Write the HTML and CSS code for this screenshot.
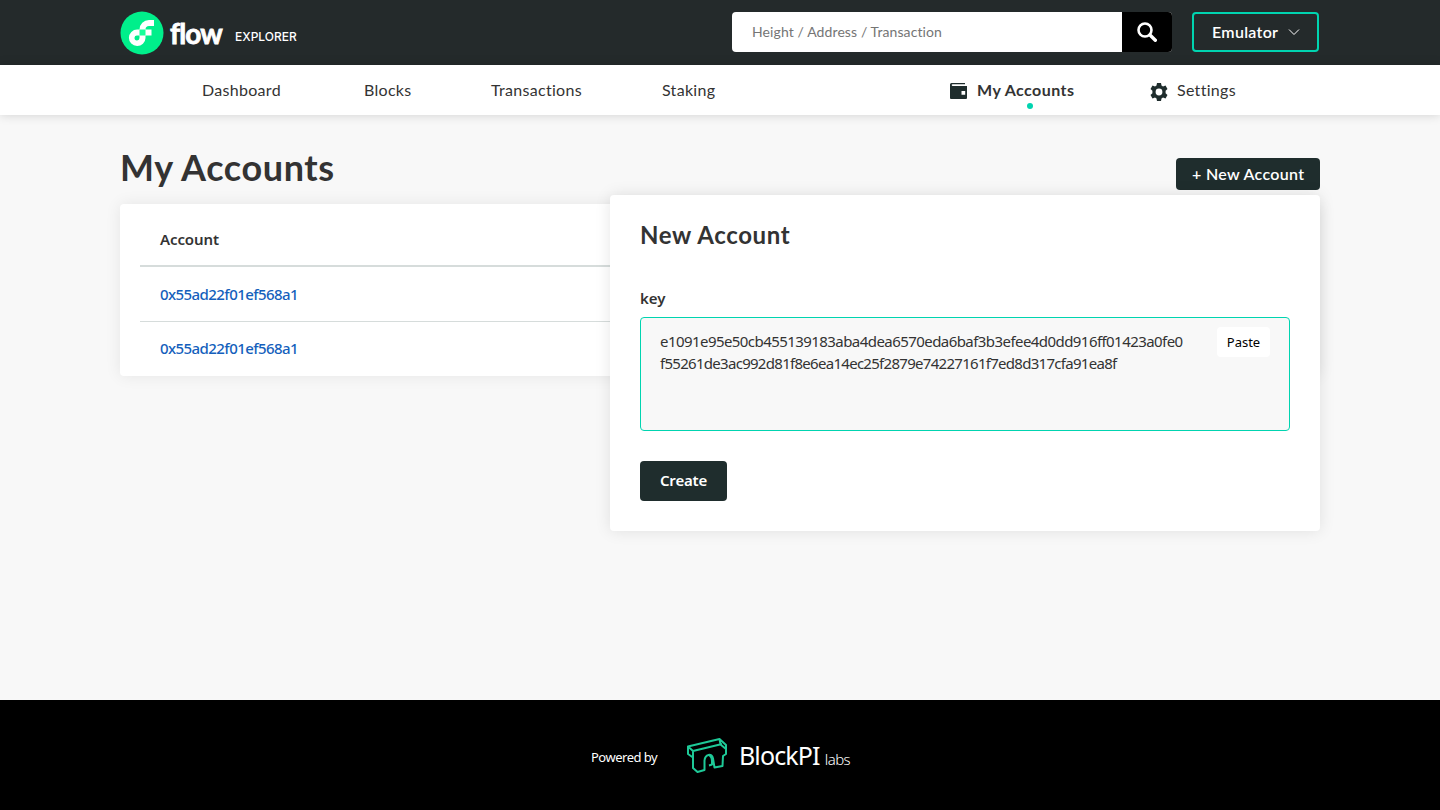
FILE: index.html
```html
<!DOCTYPE html>
<html lang="en">
<head>
<meta charset="utf-8">
<title>Flow Explorer - My Accounts</title>
<link rel="stylesheet" href="styles.css">
</head>
<body>
<header class="header">
  <div class="container header-row">
    <a class="brand">
      <svg class="brand-mark" viewBox="0 0 44 44" width="44" height="44">
        <circle cx="22" cy="22" r="21.500" fill="#00ef8b"/>
        <path fill="#fff" fill-rule="evenodd" d="M34 9v6h-5a3.500 3.500 0 0 0-3.500 3.500H31.500v6h-6v2.500a8.300 8.300 0 1 1-8.300-8.500h2.300A9.500 9.500 0 0 1 29 9zM19.500 24.500h-2.300a2.500 2.500 0 1 0 2.300 2.500z"/>
        <path fill="#16ff99" d="M19.500 18.500h6v6h-6z"/>
      </svg>
      <span class="wordmark">flow</span>
      <span class="brand-sub">EXPLORER</span>
    </a>
    <div class="header-tools">
      <div class="search">
        <div class="search-input"><span>Height / Address / Transaction</span></div>
        <div class="search-button">
          <svg viewBox="0 0 20 20" width="20" height="20" fill="none" stroke="#fff"><circle cx="8" cy="8" r="6.500" stroke-width="2.600"/><path d="M13 13l5.300 5.300" stroke-width="3.400" stroke-linecap="round"/></svg>
        </div>
      </div>
      <div class="network"><span>Emulator</span>
        <svg viewBox="0 0 12 8" width="12" height="8" fill="none" stroke="#fff" stroke-width="1"><path d="M1 1.500l5 5 5-5"/></svg>
      </div>
    </div>
  </div>
</header>
<nav class="nav">
  <div class="container nav-row">
    <a class="nav-item dashboard"><span>Dashboard</span></a>
    <a class="nav-item blocks"><span>Blocks</span></a>
    <a class="nav-item transactions"><span>Transactions</span></a>
    <a class="nav-item staking"><span>Staking</span></a>
    <a class="nav-item accounts active">
      <svg viewBox="0 0 18 18" width="18" height="18"><path fill="#1f2d2d" fill-rule="evenodd" d="M1.500 1H15v1.300H2.500a.800.800 0 0 0 0 1.600H17V16a1 1 0 0 1-1 1H1a1 1 0 0 1-1-1V2.500A1.500 1.500 0 0 1 1.500 1zM11.500 9v3.700h3.700V9z"/></svg>
      <span>My Accounts</span>
    </a>
    <a class="nav-item">
      <svg class="gear" viewBox="0 0 18 18" width="18" height="18"><path fill="#1f2d2d" fill-rule="evenodd" d="M7 0h4l.5 2.500 1.500.9 2.500-.9 2 3.400-1.900 1.800v2.600l1.900 1.800-2 3.400-2.500-.9-1.500.9L11 18H7l-.5-2.500-1.500-.9-2.500.9-2-3.400 1.900-1.800V7.700L.5 5.900l2-3.400 2.500.9 1.500-.9zm2 5.600a3.400 3.400 0 1 0 0 6.800 3.400 3.400 0 0 0 0-6.800z"/></svg>
      <span>Settings</span>
    </a>
  </div>
</nav>
<main class="container main">
  <div class="title-row">
    <h1 class="title">My Accounts</h1>
    <div class="new-account">
      <button class="button new-button"><span>+ New Account</span></button>
      <section class="popup">
        <h2 class="popup-title">New Account</h2>
        <label class="label">key</label>
        <div class="key-box">
          <div class="key-text"><span class="key-line">e1091e95e50cb455139183aba4dea6570eda6baf3b3efee4d0dd916ff01423a0fe0</span><span class="key-line last">f55261de3ac992d81f8e6ea14ec25f2879e74227161f7ed8d317cfa91ea8f</span></div>
          <button class="paste">Paste</button>
        </div>
        <button class="button create">Create</button>
      </section>
    </div>
  </div>
  <section class="table">
    <div class="row head"><span>Account</span></div>
    <div class="row"><a class="address">0x55ad22f01ef568a1</a></div>
    <div class="row"><a class="address">0x55ad22f01ef568a1</a></div>
  </section>
</main>
<footer class="footer">
  <span class="powered">Powered by</span>
  <div class="blockpi">
    <svg viewBox="0 0 42 38" width="42" height="38" fill="none" stroke="#1ec997" stroke-width="2" stroke-linejoin="round"><path d="M2 10.500L33.500 3l6.500 6v9l-3 2-.5 10-8 1.500-1.500-9c-1-6-8-4-8.500 2V34l-7 2-4.500-4V21.500L2 18zM2 10.500l5 4.500 29-7M7 15v7M33.500 3l1 5.500L40 13M23.500 19.500c2 1 2.500 3 2.500 6v3l-3 1"/></svg>
    <span class="blockpi-name">BlockPI</span><span class="labs">labs</span>
  </div>
</footer>
</body>
</html>
```

FILE: styles.css
```css
* { box-sizing: border-box; }
body { margin: 0; height: 810px; display: flex; flex-direction: column; background: #f8f8f8; color: #333; font: 16px/24px Lato, sans-serif; overflow: hidden; }
button { font: inherit; border: 0; margin: 0; padding: 0; }
span, .address { white-space: nowrap; }
svg { flex: none; display: block; }
.container { width: 1200px; margin: 0 auto; }
.header { height: 65px; background: #242a2b; color: #fff; }
.header-row { height: 100%; display: flex; justify-content: space-between; align-items: center; }
.brand { display: flex; align-items: center; }
.wordmark { width: 54px; margin-left: 6px; font: 700 28px/36px Lato, sans-serif; letter-spacing: -.9px; -webkit-text-stroke: .8px #fff; }
.brand-sub { margin: 8px 0 0 11px; font: 500 12px/16px Inter, sans-serif; }
.header-tools { display: flex; gap: 20px; margin: 0 1px 1px 0; }
.search { display: flex; width: 440px; height: 40px; border-radius: 4px; overflow: hidden; background: #fff; }
.search-input { flex: 1; padding: 8px 20px; color: #757575; font-size: 14px; letter-spacing: .1px; }
.search-button { width: 50px; background: #000; display: grid; place-items: center; }
.network { width: 127px; height: 40px; border: 2px solid #00d4b0; border-radius: 4px; display: flex; align-items: center; justify-content: space-between; padding: 0 17px 0 18px; font-weight: 600; letter-spacing: .3px; }
.nav { position: relative; height: 50px; background: #fff; box-shadow: 0 0 10px rgba(0,0,0,.16); }
.nav-row { display: flex; padding: 13px 0 0 82px; letter-spacing: .3px; }
.nav-item { display: flex; gap: 9px; }
.dashboard { width: 162px; }
.blocks { width: 127px; }
.transactions { width: 171px; }
.staking { width: 288px; }
.accounts { width: 200px; }
.nav-item svg { margin-top: 4px; }
.nav-item .gear { margin-top: 5px; }
.active { position: relative; font-weight: 700; letter-spacing: .45px; }
.active::after { content: ""; position: absolute; left: 77px; top: 25px; width: 6px; height: 6px; border-radius: 50%; background: #00d4b0; }
.main { flex: 1; padding-top: 29px; }
.title-row { height: 46px; display: flex; justify-content: space-between; }
.title { margin: -1px 0 0; font: 700 36px/48px Lato, sans-serif; letter-spacing: .6px; white-space: nowrap; }
.new-account { position: relative; padding-top: 14px; }
.button { display: block; background: #1f2d2d; color: #fff; border-radius: 4px; }
.new-button { width: 144px; height: 32px; padding-left: 16px; text-align: left; font-weight: 600; letter-spacing: .33px; }
.popup { position: absolute; top: 51px; right: 0; width: 710px; height: 336px; padding: 24px 30px; background: #fff; border-radius: 4px; box-shadow: 0 0 16px rgba(0,0,0,.1); }
.popup-title { margin: 0; font: 700 24px/32px Lato, sans-serif; letter-spacing: .65px; white-space: nowrap; }
.label { display: block; margin-top: 35px; font: 600 15px/24px "Noto Sans", sans-serif; }
.key-box { height: 114px; margin-top: 7px; padding: 9px 19px 0; border: 1px solid #00d4b0; border-radius: 4px; background: #f8f8f8; display: flex; justify-content: space-between; align-items: flex-start; }
.key-text { padding-top: 3px; display: flex; flex-direction: column; align-items: flex-start; font: 15px/22px "Noto Sans", sans-serif; }
.key-line { letter-spacing: -.56px; }
.key-line.last { letter-spacing: -.71px; }
.paste { width: 53px; height: 30px; border-radius: 4px; background: #fff; color: #000; font: 13px/30px "Noto Sans", sans-serif; }
.create { width: 87px; height: 40px; padding-bottom: 2px; margin-top: 30px; font: 600 15px/38px "Noto Sans", sans-serif; letter-spacing: -.2px; }
.table { height: 172px; margin-top: 14px; padding: 10px 20px 0; background: #fff; border-radius: 4px; box-shadow: 0 0 16px rgba(0,0,0,.08); font: 15px/54px "Noto Sans", sans-serif; }
.row { height: 54px; padding-left: 20px; }
.row + .row { height: 55px; border-bottom: 1px solid #d6dcdb; }
.row:last-child { height: 53px; border: 0; line-height: 52px; }
.head { height: 53px; border-bottom: 2px solid #d6dcdb; font-weight: 600; line-height: 50px; letter-spacing: -.1px; }
.address { color: #155fbc; font-weight: 500; letter-spacing: -.57px; }
.footer { height: 110px; background: #000; color: #fff; display: flex; justify-content: space-between; align-items: center; padding: 0 590px 0 591px; font: 13px/20px "Noto Sans", sans-serif; }
.powered { padding-top: 4px; letter-spacing: -.5px; }
.blockpi { display: flex; align-items: center; width: 164px; }
.blockpi-name { width: 82px; margin-left: 11px; font: 25px/34px "Noto Sans", sans-serif; letter-spacing: -.9px; }
.labs { margin-left: 4px; padding-top: 8px; font: 300 15px/20px "Noto Sans", sans-serif; letter-spacing: -.6px; }
```
